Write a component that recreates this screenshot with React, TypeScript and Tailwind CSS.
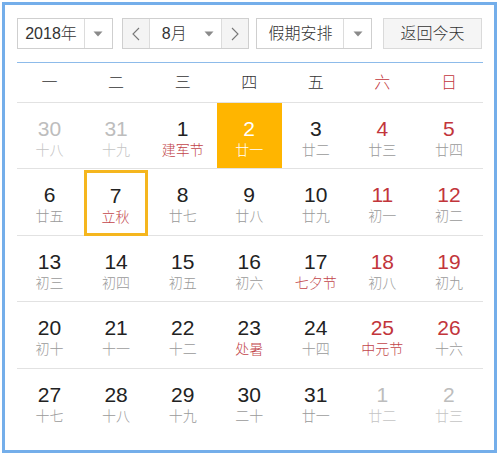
import React from 'react'

type Day = {
  n: number
  lunar: string
  muted?: boolean
  red?: boolean
  fest?: boolean
  today?: boolean
  picked?: boolean
}

const weekdays = ['一', '二', '三', '四', '五', '六', '日']

const rows: Day[][] = [
  [
    { n: 30, lunar: '十八', muted: true },
    { n: 31, lunar: '十九', muted: true },
    { n: 1, lunar: '建军节', fest: true },
    { n: 2, lunar: '廿一', today: true },
    { n: 3, lunar: '廿二' },
    { n: 4, lunar: '廿三', red: true },
    { n: 5, lunar: '廿四', red: true },
  ],
  [
    { n: 6, lunar: '廿五' },
    { n: 7, lunar: '立秋', fest: true, picked: true },
    { n: 8, lunar: '廿七' },
    { n: 9, lunar: '廿八' },
    { n: 10, lunar: '廿九' },
    { n: 11, lunar: '初一', red: true },
    { n: 12, lunar: '初二', red: true },
  ],
  [
    { n: 13, lunar: '初三' },
    { n: 14, lunar: '初四' },
    { n: 15, lunar: '初五' },
    { n: 16, lunar: '初六' },
    { n: 17, lunar: '七夕节', fest: true },
    { n: 18, lunar: '初八', red: true },
    { n: 19, lunar: '初九', red: true },
  ],
  [
    { n: 20, lunar: '初十' },
    { n: 21, lunar: '十一' },
    { n: 22, lunar: '十二' },
    { n: 23, lunar: '处暑', fest: true },
    { n: 24, lunar: '十四' },
    { n: 25, lunar: '中元节', red: true, fest: true },
    { n: 26, lunar: '十六', red: true },
  ],
  [
    { n: 27, lunar: '十七' },
    { n: 28, lunar: '十八' },
    { n: 29, lunar: '十九' },
    { n: 30, lunar: '二十' },
    { n: 31, lunar: '廿一' },
    { n: 1, lunar: '廿二', muted: true },
    { n: 2, lunar: '廿三', muted: true },
  ],
]

function Caret() {
  return (
    <svg width="10" height="6" viewBox="0 0 10 6">
      <path d="M0.5 0.5 L9.5 0.5 L5 5.5 Z" fill="#8a8a8a" />
    </svg>
  )
}

function Chevron({ dir }: { dir: 'l' | 'r' }) {
  return (
    <svg width="8" height="14" viewBox="0 0 8 14">
      <polyline
        points={dir === 'l' ? '7,1 1,7 7,13' : '1,1 7,7 1,13'}
        fill="none"
        stroke="#777"
        strokeWidth="1.1"
      />
    </svg>
  )
}

function DayCell({ d }: { d: Day }) {
  let numColor = 'text-[#222]'
  let lunarColor = 'text-[#9a9a9a]'
  if (d.muted) {
    numColor = 'text-[#bdbdbd]'
    lunarColor = 'text-[#c4c4c4]'
  } else if (d.red) numColor = 'text-[#c2353b]'
  if (d.fest) lunarColor = 'text-[#c2454a]'
  if (d.today) {
    numColor = 'text-white'
    lunarColor = 'text-white'
  }

  return (
    <div className="h-full w-[65px]">
      <div
        className={
          'flex h-full flex-col items-center ' +
          (d.today ? 'bg-[#ffb500] pt-[14px] ' : '') +
          (d.picked ? 'mt-px h-[64px] border-[3px] border-[#f5b61e] pt-[11px] w-[64px] ' : '') +
          (!d.today && !d.picked ? 'pt-[14px]' : '')
        }
      >
        <span className={'text-[21px] leading-[24px] ' + numColor}>{d.n}</span>
        <span className={'text-[14px] font-light leading-[19px] ' + lunarColor}>{d.lunar}</span>
      </div>
    </div>
  )
}

export default function App() {
  return (
    <div
      className="ml-[2px] mt-[2px] h-[451px] w-[495px] border-[3px] border-[#74aeea] bg-white px-[12px] pt-[13px]"
      style={{ fontFamily: '"Liberation Sans", "Noto Sans CJK SC", sans-serif' }}
    >
      {/* Controls */}
      <div className="flex h-[31px] items-stretch text-[16px] font-light text-[#333]">
        <div className="flex w-[96px] border border-[#cfcfcf] bg-white">
          <div className="flex w-[66px] items-center justify-center">2018年</div>
          <div className="flex flex-1 items-center justify-center border-l border-[#dcdcdc]">
            <Caret />
          </div>
        </div>
        <div className="ml-[9px] flex w-[128px] border border-[#cfcfcf]">
          <div className="flex w-[26px] items-center justify-center bg-[#f4f4f4]">
            <Chevron dir="l" />
          </div>
          <div className="flex w-[73px] items-center border-x border-[#dcdcdc] bg-white pl-[12px]">
            <span>8月</span>
            <span className="ml-[17px] flex">
              <Caret />
            </span>
          </div>
          <div className="flex flex-1 items-center justify-center bg-[#f4f4f4]">
            <Chevron dir="r" />
          </div>
        </div>
        <div className="ml-[7px] flex w-[116px] border border-[#cfcfcf] bg-white">
          <div className="flex w-[86px] items-center justify-center">假期安排</div>
          <div className="flex flex-1 items-center justify-center border-l border-[#dcdcdc]">
            <Caret />
          </div>
        </div>
        <div className="ml-[11px] flex w-[99px] items-center justify-center border border-[#dadada] bg-[#f5f5f5]">
          返回今天
        </div>
      </div>

      {/* Calendar */}
      <div className="mt-[13px] w-[466px] border-t border-[#8dbbea]">
        <div className="grid h-[40px] grid-cols-7 border-b border-[#e2e2e2] text-[16px] font-light">
          {weekdays.map((w, i) => (
            <div
              key={w}
              className={
                'flex w-[65px] items-center justify-center ' +
                (i >= 5 ? 'text-[#c2353b]' : 'text-[#333]')
              }
            >
              {w}
            </div>
          ))}
        </div>
        {rows.map((row, ri) => (
          <div
            key={ri}
            className={
              'grid h-[66.4px] grid-cols-7 ' +
              (ri < rows.length - 1 ? 'border-b border-[#e2e2e2]' : '')
            }
          >
            {row.map((d, ci) => (
              <DayCell key={ci} d={d} />
            ))}
          </div>
        ))}
      </div>
    </div>
  )
}
